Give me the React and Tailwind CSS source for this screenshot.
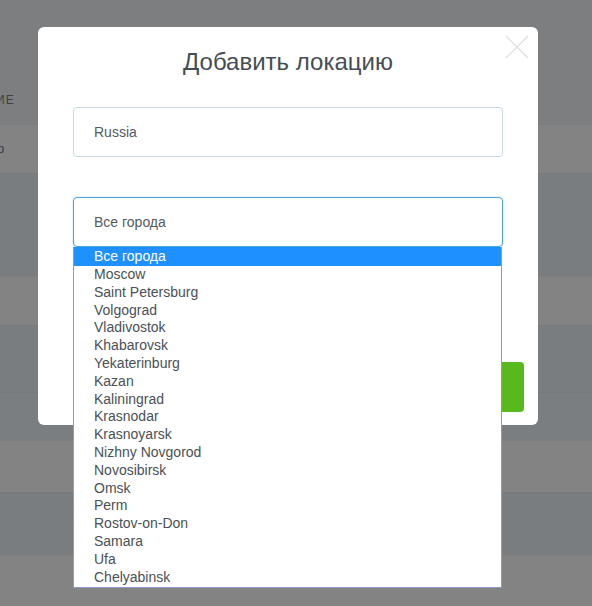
import React from 'react';

// Города в выпадающем списке
const CITIES = [
  'Moscow', 'Saint Petersburg', 'Volgograd', 'Vladivostok', 'Khabarovsk',
  'Yekaterinburg', 'Kazan', 'Kaliningrad', 'Krasnodar', 'Krasnoyarsk',
  'Nizhny Novgorod', 'Novosibirsk', 'Omsk', 'Perm', 'Rostov-on-Don',
  'Samara', 'Ufa', 'Chelyabinsk',
];

const App = () => {
  return (
    <div className="relative w-[592px] h-[606px] overflow-hidden bg-[#7c7e7f] font-['Liberation_Sans',Arial,sans-serif]">
      {/* ── Page behind the overlay ───────────────────────────── */}
      <div className="flex flex-col">
        <div className="h-[124px] bg-[#7c7e7f] flex items-end pb-[15px]">
          <span className="text-[12px] tracking-[1px] text-[#3d4246] -ml-[4px]">ИЕ</span>
        </div>
        <div className="h-[49px] bg-[#838383] border-t border-[#7a7c7d] flex items-center">
          <span className="text-[13px] text-[#2e3f52] -ml-[3px]">р</span>
        </div>
        <div className="h-[103px] bg-[#7a7d80] border-t border-[#74797c]" />
        <div className="h-[49px] bg-[#838383] border-t border-[#7d7f80]" />
        <div className="h-[67px] bg-[#7a7d80] border-t border-[#74797c]" />
        <div className="h-[48px] bg-[#7b7e80] border-t border-[#777a7c]" />
        <div className="h-[52px] bg-[#838383] border-t border-[#7a7c7d]" />
        <div className="h-[63px] bg-[#7a7d80] border-t border-[#74797c]" />
        <div className="h-[51px] bg-[#838383] border-t border-[#7d7f80]" />
      </div>

      {/* ── Modal ─────────────────────────────────────────────── */}
      <div className="absolute left-[38px] top-[27px] w-[500px] h-[398px] bg-white rounded-[6px] px-[35px]">
        {/* close */}
        <svg className="absolute right-[9px] top-[8px]" width="24" height="24" viewBox="0 0 24 24">
          <path d="M1 1 L23 23 M23 1 L1 23" stroke="#dcdcdc" strokeWidth="1.2" fill="none" />
        </svg>

        <h2 className="text-center text-[24px] leading-[28px] text-[#464d53] pt-[21px]">
          Добавить локацию
        </h2>

        <div className="mt-[31px] h-[50px] border border-[#c6dde6] rounded-[4px] flex items-center pl-[20px] text-[14px] text-[#555a5e]">
          Russia
        </div>

        <div className="relative mt-[40px]">
          <div className="h-[50px] border border-[#4aa3d9] rounded-[4px] flex items-center pl-[20px] text-[14px] text-[#555a5e] shadow-[0_0_2px_rgba(74,163,217,0.4)]">
            Все города
          </div>

          {/* green button behind the open list */}
          <div className="absolute right-[-21px] top-[165px] w-[60px] h-[50px] bg-[#57b91c] rounded-[4px]" />

          {/* open dropdown */}
          <ul className="absolute left-0 top-[50px] w-[429px] h-[341px] bg-white border border-[#8a9bca] border-t-0 text-[14px] leading-[17.8px] text-[#4a5056] z-10">
            <li className="bg-[#1e90ff] text-white pl-[20px] h-[19px] leading-[19px]">Все города</li>
            {CITIES.map(c => (
              <li key={c} className="pl-[20px]">{c}</li>
            ))}
          </ul>
        </div>
      </div>
    </div>
  );
};

export default App;
